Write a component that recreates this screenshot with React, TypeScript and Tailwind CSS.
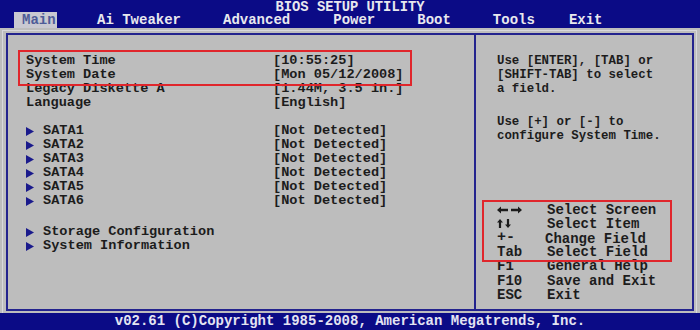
import React from "react";

const mono = { fontFamily: '"Liberation Mono", "DejaVu Sans Mono", monospace' };

function Tri() {
  return (
    <span className="inline-flex w-[17px] h-[14px] items-center">
      <svg width="8" height="9" viewBox="0 0 8 9">
        <polygon points="0,0 8,4.5 0,9" fill="#1a1a8c" />
      </svg>
    </span>
  );
}

function LR() {
  return (
    <svg width="25" height="8" viewBox="0 0 25 8">
      <polygon points="0,4 4,0.5 4,2.8 11,2.8 11,5.2 4,5.2 4,7.5" fill="#1c1c1c" />
      <polygon points="25,4 21,0.5 21,2.8 14,2.8 14,5.2 21,5.2 21,7.5" fill="#1c1c1c" />
    </svg>
  );
}

function UD() {
  return (
    <svg width="14" height="9" viewBox="0 0 14 9">
      <polygon points="3,0 6,3.5 4.1,3.5 4.1,9 1.9,9 1.9,3.5 0,3.5" fill="#1c1c1c" />
      <polygon points="11,9 14,5.5 12.1,5.5 12.1,0 9.9,0 9.9,5.5 8,5.5" fill="#1c1c1c" />
    </svg>
  );
}

const tabs: { name: string; ml: string }[] = [
  { name: "Ai Tweaker", ml: "ml-[40px]" },
  { name: "Advanced", ml: "ml-[42px]" },
  { name: "Power", ml: "ml-[43px]" },
  { name: "Boot", ml: "ml-[42px]" },
  { name: "Tools", ml: "ml-[42px]" },
  { name: "Exit", ml: "ml-[34px]" },
];

const sata = ["SATA1", "SATA2", "SATA3", "SATA4", "SATA5", "SATA6"];

function Row({ label, value, tri }: { label: string; value?: string; tri?: boolean }) {
  return (
    <div className="flex h-[14px] leading-[14px] whitespace-pre">
      <div className="w-[247px] flex items-center">
        {tri && <Tri />}
        <span>{label}</span>
      </div>
      {value && <div>{value}</div>}
    </div>
  );
}

function Key({ k, d }: { k: React.ReactNode; d: string }) {
  return (
    <div className="flex h-[14.2px] leading-[14.2px]">
      <div className="w-[50px] flex items-center">{k}</div>
      <div>{d}</div>
    </div>
  );
}

export default function App() {
  return (
    <div className="w-[700px] h-[330px] bg-[#bdbdbd] flex flex-col font-bold overflow-hidden" style={mono}>
      {/* Header */}
      <div className="h-[28px] bg-[#0b0b86] text-[#e8e8ee] flex flex-col shrink-0">
        <div className="h-[12px] leading-[16px] text-[13.8px] text-center whitespace-pre">BIOS SETUP UTILITY</div>
        <div className="h-[16px] leading-[16px] text-[14px] flex pl-[14px] whitespace-pre">
          <span className="w-[43px] pl-[8px] bg-[#c9c9d1] text-[#4e5c98]">Main</span>
          {tabs.map((t) => (
            <span key={t.name} className={t.ml}>
              {t.name}
            </span>
          ))}
        </div>
      </div>

      {/* Body */}
      <div className="h-[285px] pt-[2px] pl-[2px] pr-[3px] shrink-0">
        <div className="h-full border border-b-0 border-[#d8d8dc] pt-[2px] pl-[3px] pr-[2px] pb-[2px]">
          <div className="h-full border-2 border-[#23238e] flex text-[#1c1c1c]">
            {/* Left pane */}
            <div className="w-[468px] h-full border-r-2 border-[#23238e] relative pt-[19px] pl-[18px] text-[13.6px]">
              <Row label="System Time" value="[10:55:25]" />
              <Row label="System Date" value="[Mon 05/12/2008]" />
              <Row label="Legacy Diskette A" value="[1.44M, 3.5 in.]" />
              <Row label="Language" value="[English]" />
              <div className="h-[14px]" />
              {sata.map((s) => (
                <Row key={s} label={s} value="[Not Detected]" tri />
              ))}
              <div className="h-[17px]" />
              <Row label="Storage Configuration" tri />
              <Row label="System Information" tri />
              <div className="absolute left-[10px] top-[15px] w-[394px] h-[36px] border-2 border-[#e0262c]" />
            </div>

            {/* Right pane */}
            <div className="flex-1 h-full flex flex-col pl-[21px] pt-[19px] pb-[7px]">
              <div className="text-[12.4px] leading-[14px] whitespace-pre">
                <div>Use [ENTER], [TAB] or</div>
                <div>[SHIFT-TAB] to select</div>
                <div>a field.</div>
                <div className="mt-[19px]">Use [+] or [-] to</div>
                <div>configure System Time.</div>
              </div>
              <div className="mt-auto relative text-[14px] whitespace-pre">
                <Key k={<LR />} d="Select Screen" />
                <Key k={<UD />} d="Select Item" />
                <div className="flex h-[14.2px] leading-[14.2px]">
                  <div className="w-[48px] text-[15px]">+-</div>
                  <div className="mt-[1px]">Change Field</div>
                </div>
                <Key k="Tab" d="Select Field" />
                <Key k="F1" d="General Help" />
                <Key k="F10" d="Save and Exit" />
                <Key k="ESC" d="Exit" />
                <div className="absolute left-[-15px] top-[-3px] w-[190px] h-[62px] border-2 border-[#e0262c]" />
              </div>
            </div>
          </div>
        </div>
      </div>

      {/* Footer */}
      <div className="flex-1 bg-[#0b0b86] text-[#e4e4f2] text-[14px] leading-[17px] text-center whitespace-pre">
        v02.61 (C)Copyright 1985-2008, American Megatrends, Inc.
      </div>
    </div>
  );
}
